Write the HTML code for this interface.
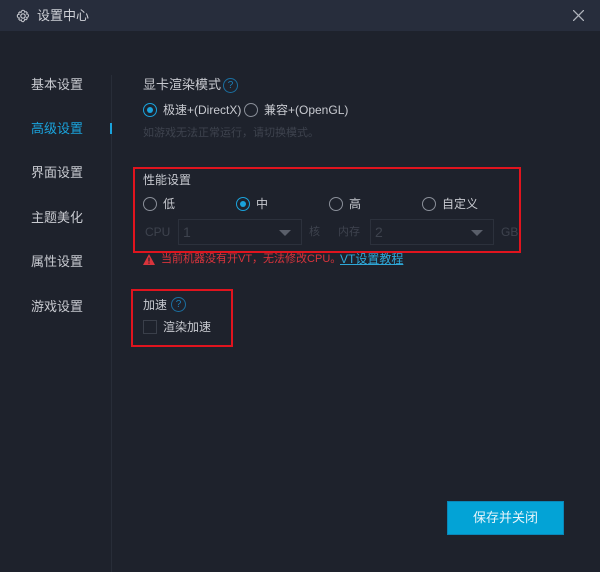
<!DOCTYPE html><html><head><meta charset="utf-8"><style>
*{margin:0;padding:0;box-sizing:border-box}
body{width:600px;height:572px;background:#1e222c;font-family:"Liberation Sans","Noto Sans CJK SC",sans-serif;position:relative;overflow:hidden;color:#c8cad0;font-size:12px}
.a{position:absolute;white-space:nowrap;line-height:14px}
.hdr{position:absolute;left:0;top:0;width:600px;height:31px;background:#272d3c}
.nav{font-size:13px;color:#c8cad0}
.radio{position:absolute;width:14px;height:14px;border:1px solid #8a8f99;border-radius:50%}
.radio.on{border-color:#1aa3dc}
.radio.on::after{content:"";position:absolute;left:3px;top:3px;width:6px;height:6px;border-radius:50%;background:#1aa3dc}
.q{position:absolute;width:15px;height:15px;border:1px solid #1b6fa0;border-radius:50%;color:#1b7fb8;font-size:10px;text-align:center;line-height:13px}
.sel{position:absolute;height:26px;border:1px solid #2c313c;color:#3e434e;font-size:14px;padding-left:4px;line-height:24px}
.sel::after{content:"";position:absolute;right:10px;top:10px;border-left:6px solid transparent;border-right:6px solid transparent;border-top:6px solid #5a5f6a}
.dim{color:#3e434e}
.box{position:absolute;border:2px solid #e0141e}
</style></head><body>
<div class="hdr"></div>
<svg class="a" style="left:16px;top:9px" width="14" height="14" viewBox="0 0 14 14"><circle cx="7" cy="7" r="2.2" fill="none" stroke="#c8cad0" stroke-width="1.2"/><path d="M7 1.2l1.4.6.3 1.4 1.3-.6 1.2 1.1-.6 1.3 1.4.3.6 1.4-.6 1.4-1.4.3.6 1.3-1.2 1.1-1.3-.6-.3 1.4L7 12.8l-1.4-.6-.3-1.4-1.3.6-1.2-1.1.6-1.3-1.4-.3L1.2 7l.6-1.4 1.4-.3-.6-1.3 1.2-1.1 1.3.6.3-1.4z" fill="none" stroke="#c8cad0" stroke-width="1"/></svg>
<div class="a" style="left:37px;top:9px;font-size:13px;color:#d0d2d8">设置中心</div>
<svg class="a" style="left:573px;top:10px" width="11" height="11"><path d="M0 0L11 11M11 0L0 11" stroke="#b0b4bc" stroke-width="1.3"/></svg>
<div class="a" style="left:111px;top:75px;width:1px;height:497px;background:#282d38"></div>
<div class="a" style="left:110px;top:123px;width:2px;height:11px;background:#1aa3dc"></div>
<div class="a nav" style="left:31px;top:78px">基本设置</div>
<div class="a nav" style="left:31px;top:122px;color:#1aa3dc">高级设置</div>
<div class="a nav" style="left:31px;top:166px">界面设置</div>
<div class="a nav" style="left:31px;top:211px">主题美化</div>
<div class="a nav" style="left:31px;top:255px">属性设置</div>
<div class="a nav" style="left:31px;top:300px">游戏设置</div>
<div class="a" style="left:143px;top:78px;font-size:13px">显卡渲染模式</div>
<div class="q" style="left:223px;top:78px">?</div>
<div class="radio on" style="left:143px;top:103px"></div>
<div class="a" style="left:163px;top:103px">极速+(DirectX)</div>
<div class="radio" style="left:244px;top:103px"></div>
<div class="a" style="left:264px;top:103px">兼容+(OpenGL)</div>
<div class="a dim" style="left:143px;top:126px;font-size:11px">如游戏无法正常运行，请切换模式。</div>
<div class="box" style="left:133px;top:167px;width:388px;height:86px"></div>
<div class="a" style="left:143px;top:173px;font-size:12px">性能设置</div>
<div class="radio" style="left:143px;top:197px"></div><div class="a" style="left:163px;top:197px">低</div>
<div class="radio on" style="left:236px;top:197px"></div><div class="a" style="left:256px;top:197px">中</div>
<div class="radio" style="left:329px;top:197px"></div><div class="a" style="left:349px;top:197px">高</div>
<div class="radio" style="left:422px;top:197px"></div><div class="a" style="left:442px;top:197px">自定义</div>
<div class="a dim" style="left:145px;top:225px">CPU</div>
<div class="sel" style="left:178px;top:219px;width:124px">1</div>
<div class="a dim" style="left:309px;top:225px;font-size:11px">核</div>
<div class="a dim" style="left:338px;top:225px;font-size:11px">内存</div>
<div class="sel" style="left:370px;top:219px;width:124px">2</div>
<div class="a dim" style="left:501px;top:225px">GB</div>
<svg class="a" style="left:143px;top:254px" width="12" height="11"><path d="M6 0L12 11H0z" fill="#d9343c"/><rect x="5.4" y="3.5" width="1.2" height="4" fill="#1e222c"/><rect x="5.4" y="8.5" width="1.2" height="1.2" fill="#1e222c"/></svg>
<div class="a" style="left:161px;top:252px;color:#d9343c;font-size:11px">当前机器没有开VT，无法修改CPU。</div>
<div class="a" style="left:340px;top:252px;color:#2ea8d8;text-decoration:underline">VT设置教程</div>
<div class="box" style="left:131px;top:289px;width:102px;height:58px"></div>
<div class="a" style="left:143px;top:298px">加速</div>
<div class="q" style="left:171px;top:297px">?</div>
<div class="a" style="left:143px;top:320px;width:14px;height:14px;border:1px solid #3a3f4a"></div>
<div class="a" style="left:163px;top:320px">渲染加速</div>
<div class="a" style="left:447px;top:501px;width:117px;height:34px;background:#03a3d6;border:1px solid #0a87b8;color:#e6f4fa;font-size:13px;text-align:center;line-height:32px">保存并关闭</div>
</body></html>
